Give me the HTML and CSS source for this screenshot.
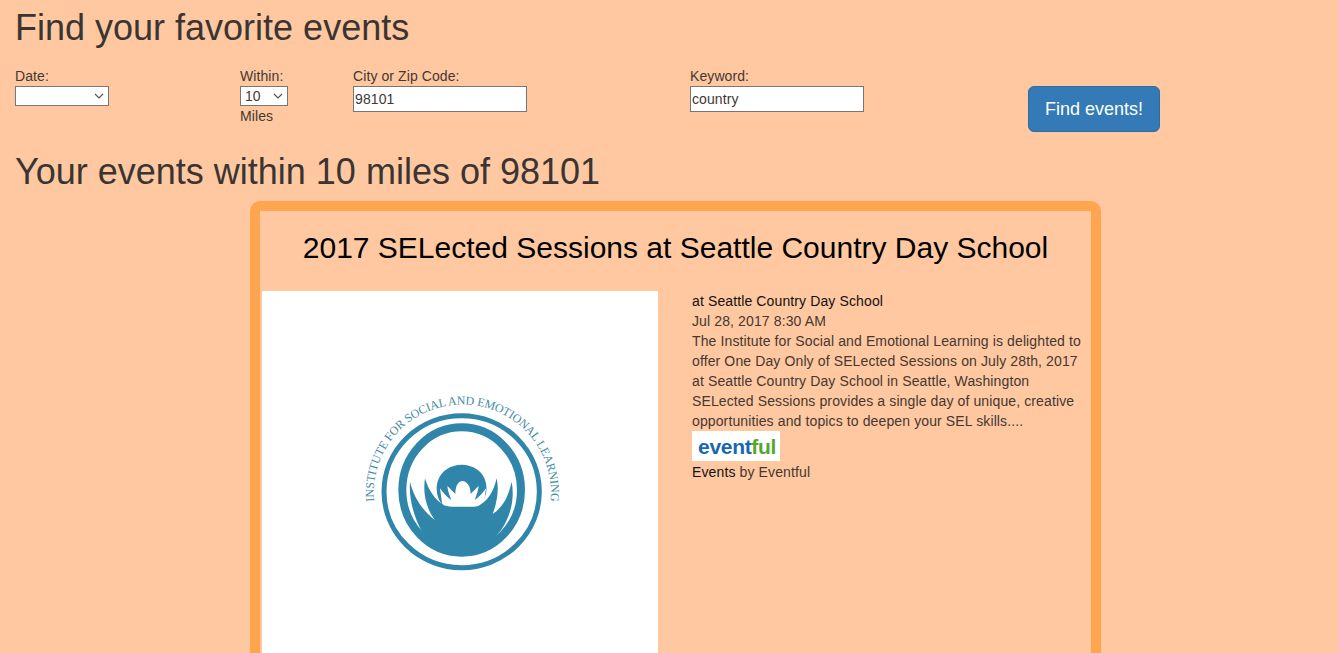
FILE: index.html
```html
<!DOCTYPE html>
<html lang="en">
<head>
<meta charset="utf-8">
<title>Find your favorite events</title>
<link rel="stylesheet" href="styles.css">
</head>
<body>
<main class="page">
  <h1 class="heading">Find your favorite events</h1>
  <form class="search">
    <div class="field field-date">
      <label class="label" for="date">Date:</label>
      <select class="select select-date" id="date"><option></option></select>
    </div>
    <div class="field field-within">
      <label class="label" for="within">Within:</label>
      <select class="select select-within" id="within"><option>10</option></select>
      <span class="label">Miles</span>
    </div>
    <div class="field field-city">
      <label class="label" for="city">City or Zip Code:</label>
      <input class="input" id="city" value="98101">
    </div>
    <div class="field field-keyword">
      <label class="label" for="keyword">Keyword:</label>
      <input class="input" id="keyword" value="country">
    </div>
    <button class="button" type="button">Find events!</button>
  </form>
  <h1 class="heading heading-results">Your events within 10 miles of 98101</h1>
  <article class="card">
    <h2 class="card-title">2017 SELected Sessions at Seattle Country Day School</h2>
    <div class="card-body">
      <div class="poster">
        <svg class="poster-art" viewBox="0 0 396 396" aria-label="Institute for Social and Emotional Learning logo">
          <g transform="translate(78 89) scale(.33333)">
            <defs><path id="textArc" d="M108 400A266 266 0 1 1 626 400"/></defs>
            <text class="logo-text"><textPath href="#textArc" startOffset="50%" text-anchor="middle" textLength="885">INSTITUTE FOR SOCIAL AND EMOTIONAL LEARNING</textPath></text>
            <ellipse class="ring-outer" cx="365" cy="335" rx="233" ry="228"/>
            <ellipse class="ring-inner" cx="365" cy="330" rx="178" ry="188"/>
            <path class="logo-fill" d="M305 372C283 345 283 292 320 268C345 250 385 250 410 268C447 292 447 345 422 372L422 395L305 395Z"/>
            <path class="logo-gap" d="M308 380C304 355 302 340 300 325C310 340 322 352 334 360C328 345 323 330 322 318C332 328 340 335 346 342C346 318 355 303 367 303C380 303 392 318 392 342C398 335 406 328 416 318C415 330 410 345 404 360C416 352 428 340 438 325C436 340 434 355 430 380Z"/>
            <path class="logo-fill" d="M210 305C206 355 222 415 248 458C290 512 330 522 365 522C410 522 450 500 485 448C510 410 525 360 515 305C505 350 490 380 458 402C470 370 478 330 470 295C460 340 440 365 415 378C395 385 335 385 312 376C285 360 265 330 255 295C248 340 258 385 285 420C250 395 220 350 210 305Z"/>
          </g>
        </svg>
      </div>
      <div class="details">
        <a class="link" href="#">at Seattle Country Day School</a>
        <p class="detail-line">Jul 28, 2017 8:30 AM</p>
        <p class="detail-line">The Institute for Social and Emotional Learning is delighted to offer One Day Only of SELected Sessions on July 28th, 2017 at Seattle Country Day School in Seattle, Washington SELected Sessions provides a single day of unique, creative opportunities and topics to deepen your SEL skills....</p>
        <span class="eventful-logo"><span class="eventful-blue">event</span><span class="eventful-green">ful</span></span>
        <p class="detail-line detail-source"><a class="link" href="#">Events</a> by Eventful</p>
      </div>
    </div>
  </article>
</main>
</body>
</html>
```
FILE: styles.css
```css
html, body {
  margin: 0;
  height: 653px;
  overflow: hidden;
}
body {
  background: #ffc8a0;
  color: #433833;
  font: 14px/20px "Liberation Sans", Arial, sans-serif;
  letter-spacing: .09px;
}
.page {
  padding: 0 15px;
}
.heading {
  margin: 0;
  padding-top: 8px;
  color: #3a3532;
  font-size: 36px;
  font-weight: 400;
  line-height: 40px;
  letter-spacing: 0;
}
.search {
  display: flex;
  align-items: flex-start;
  margin-top: 18px;
}
.field {
  display: flex;
  flex-direction: column;
  align-items: flex-start;
}
.field-date { width: 225px; }
.field-within { width: 113px; }
.field-city { width: 337px; }
.field-keyword { width: 338px; }
.label {
  line-height: 20px;
}
.select {
  appearance: none;
  box-sizing: border-box;
  height: 20px;
  margin: 0;
  padding: 0 0 0 4px;
  border: 1px solid #767676;
  border-radius: 0;
  background: #fff url("data:image/svg+xml,%3Csvg xmlns='http://www.w3.org/2000/svg' width='10' height='6'%3E%3Cpath d='M1 1l4 4 4-4' fill='none' stroke='%23555' stroke-width='1.2'/%3E%3C/svg%3E") no-repeat right 4px center;
  color: #433833;
  font: 14px "Liberation Sans", Arial, sans-serif;
}
.select-date { width: 94px; }
.select-within { width: 48px; }
.input {
  box-sizing: border-box;
  width: 174px;
  height: 26px;
  margin: 0;
  padding: 1px;
  border: 1px solid #767676;
  background: #fff;
  color: #433833;
  font: 14px "Liberation Sans", Arial, sans-serif;
  letter-spacing: .09px;
}
.button {
  width: 132px;
  height: 46px;
  margin-top: 20px;
  padding: 0;
  border: 1px solid #2e6da4;
  border-radius: 6px;
  background: #337ab7;
  color: #fff;
  font: 18px "Liberation Sans", Arial, sans-serif;
}
.heading-results {
  margin-top: 12px;
}
.card {
  box-sizing: border-box;
  width: 851px;
  height: 600px;
  margin: 9px 0 0 235px;
  padding: 0 2px;
  border: 10px solid #ffa54f;
  border-radius: 10px;
}
.card-title {
  margin: 0;
  padding: 18px 0 25px;
  color: #000;
  font-size: 30px;
  font-weight: 400;
  line-height: 37px;
  letter-spacing: 0;
  text-align: center;
}
.card-body {
  display: flex;
  gap: 34px;
}
.poster {
  flex: none;
  width: 396px;
  height: 396px;
  background: #fff;
}
.poster-art {
  display: block;
  width: 396px;
  height: 396px;
}
.logo-text {
  fill: #3f8ba5;
  font: 36px "Liberation Serif", serif;
}
.ring-outer {
  fill: none;
  stroke: #2f86aa;
  stroke-width: 15;
}
.ring-inner {
  fill: none;
  stroke: #2f86aa;
  stroke-width: 24;
}
.logo-fill { fill: #2f86aa; }
.logo-gap { fill: #fff; }
.details {
  width: 392px;
  letter-spacing: .12px;
}
.link {
  color: #111;
  text-decoration: none;
}
.detail-line {
  margin: 0;
}
.detail-source {
  margin-top: 1px;
}
.eventful-logo {
  display: block;
  box-sizing: border-box;
  width: 88px;
  height: 30px;
  padding-left: 6px;
  background: #fff;
  font: 700 21px/31px "Liberation Sans", Arial, sans-serif;
  letter-spacing: -.3px;
}
.eventful-blue { color: #1767b3; }
.eventful-green { color: #55a630; }
```
